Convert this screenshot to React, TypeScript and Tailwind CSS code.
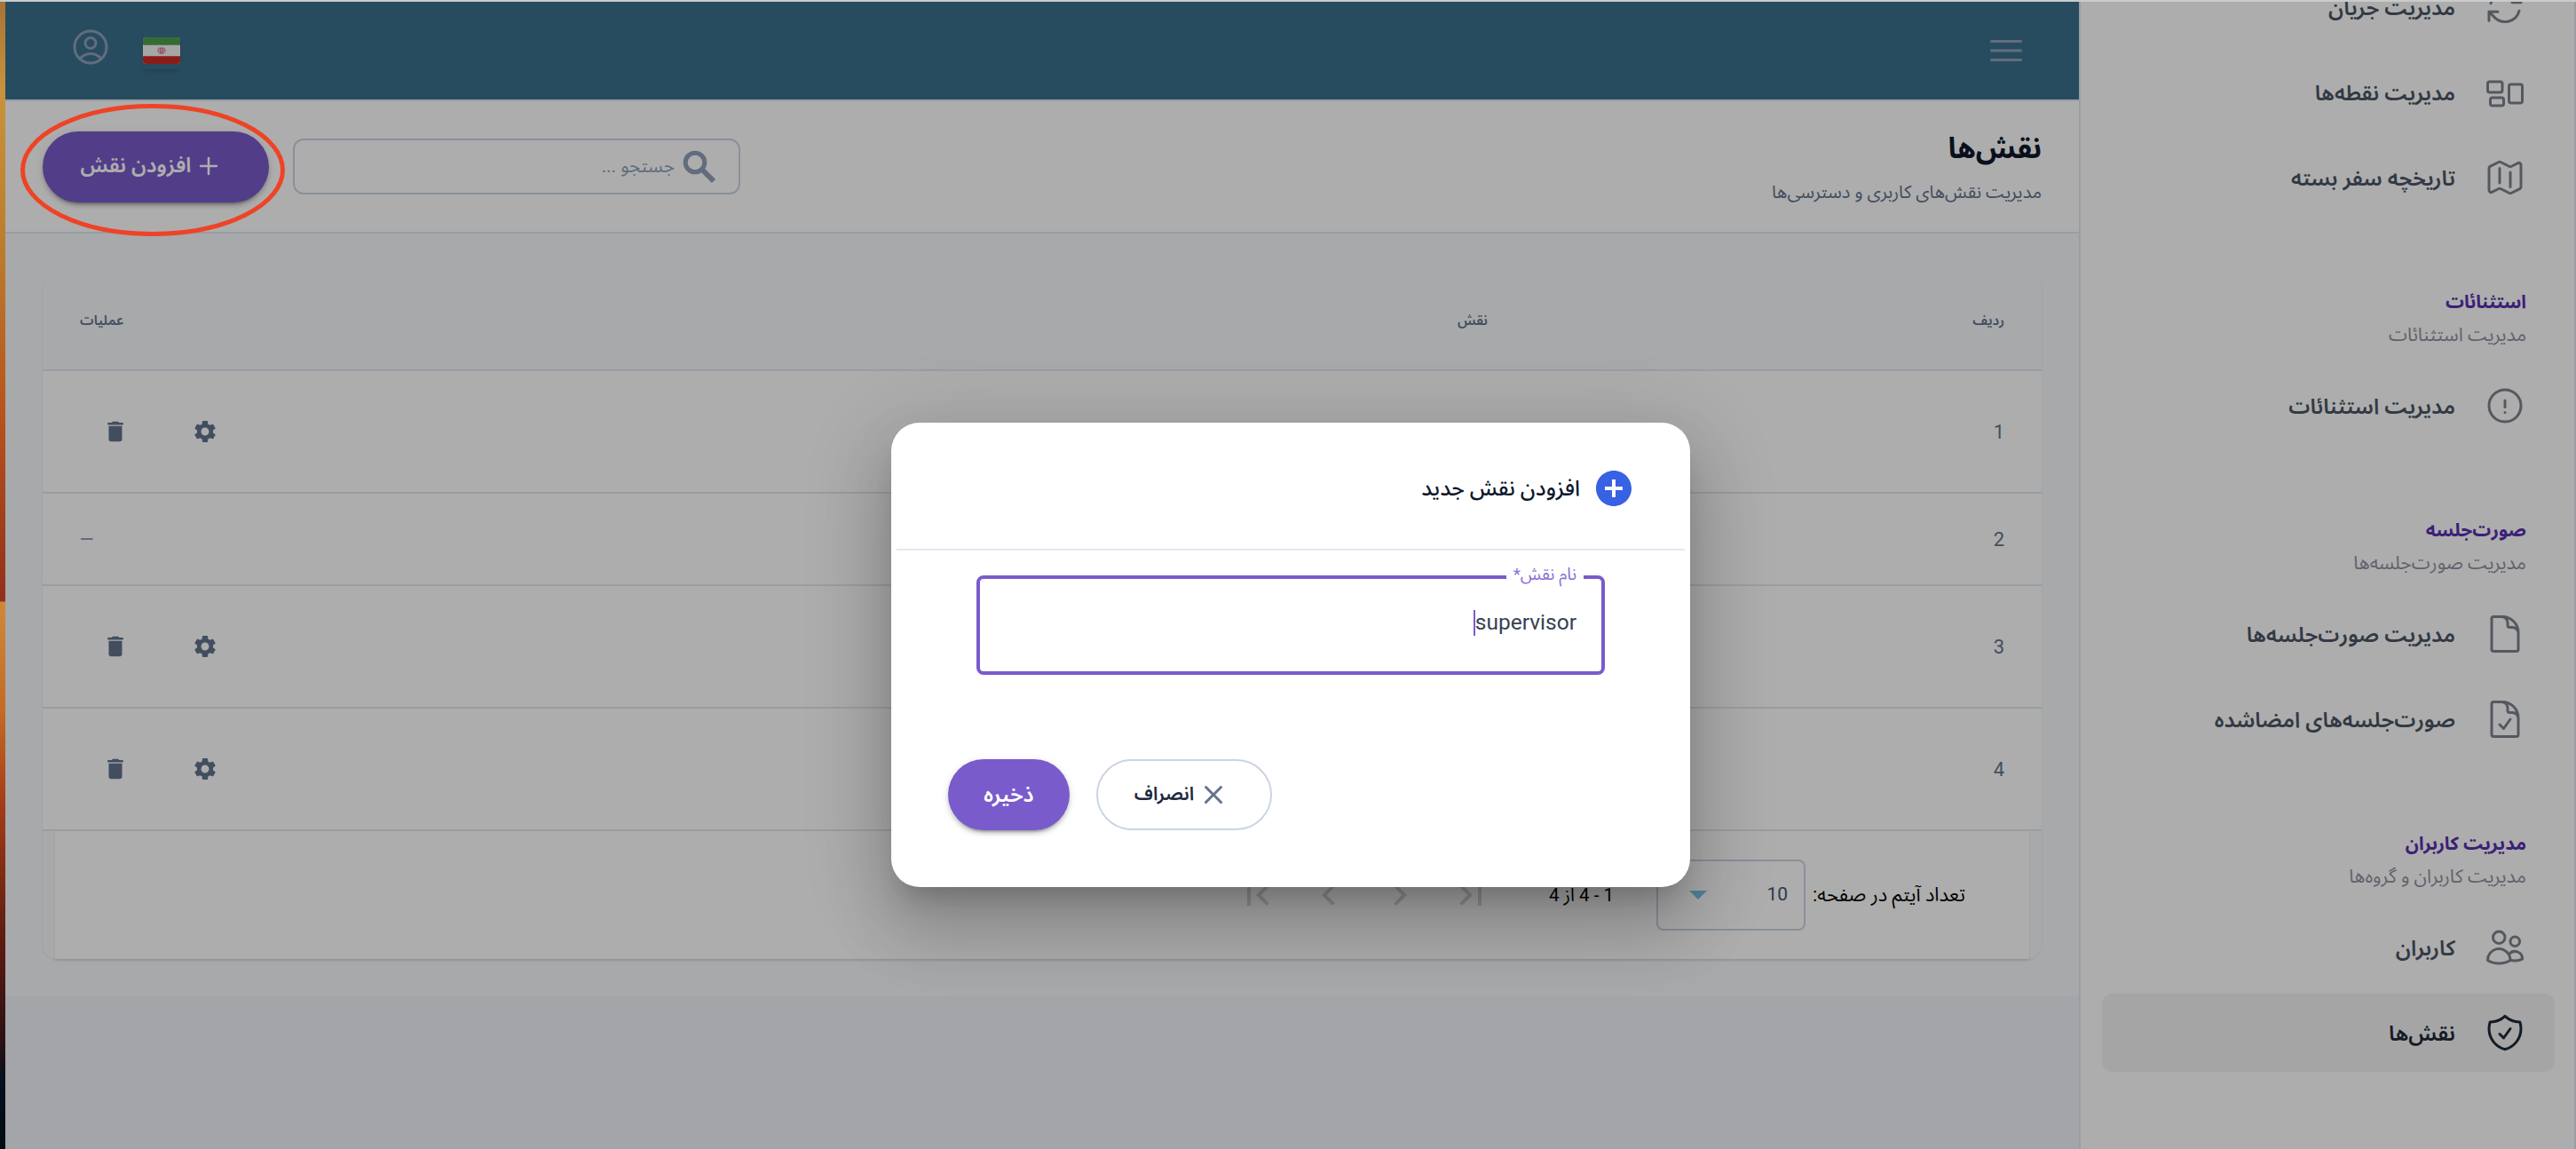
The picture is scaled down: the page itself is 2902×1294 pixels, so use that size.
import React from 'react';
import {
  HiBars3,
  HiMiniPlus,
  HiMiniXMark,
  HiOutlineArrowPath,
  HiOutlineDocument,
  HiOutlineDocumentCheck,
  HiOutlineExclamationCircle,
  HiOutlineMap,
  HiOutlineRectangleGroup,
  HiOutlineShieldCheck,
  HiOutlineUserCircle,
  HiOutlineUsers,
} from 'react-icons/hi2';
import {
  MdAddCircle,
  MdChevronLeft,
  MdChevronRight,
  MdDelete,
  MdFirstPage,
  MdLastPage,
  MdSettings,
} from 'react-icons/md';

type NavItem = { label: string; icon: React.ElementType; active?: boolean };
type NavGroup = { title?: string; subtitle?: string; items: NavItem[] };

const navGroups: NavGroup[] = [
  {
    items: [
      { label: 'مدیریت جریان', icon: HiOutlineArrowPath },
      { label: 'مدیریت نقطه‌ها', icon: HiOutlineRectangleGroup },
      { label: 'تاریخچه سفر بسته', icon: HiOutlineMap },
    ],
  },
  {
    title: 'استثنائات',
    subtitle: 'مدیریت استثنائات',
    items: [{ label: 'مدیریت استثنائات', icon: HiOutlineExclamationCircle }],
  },
  {
    title: 'صورت‌جلسه',
    subtitle: 'مدیریت صورت‌جلسه‌ها',
    items: [
      { label: 'مدیریت صورت‌جلسه‌ها', icon: HiOutlineDocument },
      { label: 'صورت‌جلسه‌های امضاشده', icon: HiOutlineDocumentCheck },
    ],
  },
  {
    title: 'مدیریت کاربران',
    subtitle: 'مدیریت کاربران و گروه‌ها',
    items: [
      { label: 'کاربران', icon: HiOutlineUsers },
      { label: 'نقش‌ها', icon: HiOutlineShieldCheck, active: true },
    ],
  },
  { title: 'تنظیمات', items: [] },
];

const roles = [
  { id: 1, editable: true },
  { id: 2, editable: false },
  { id: 3, editable: true },
  { id: 4, editable: true },
];

function Sidebar() {
  return (
    <aside className="w-[560px] shrink-0 overflow-hidden border-l-2 border-slate-200 bg-white">
      <nav className="-mt-[38px] border-r-2 border-slate-200 pl-6 pr-[22px]">
        {navGroups.map((group, index) => (
          <div key={index}>
            {group.title && (
              <div className="h-[169px] pr-8 pt-[76px]">
                <div className="text-[20.7px] font-bold leading-[41px] text-[#5730b0]">{group.title}</div>
                <div className="text-[21.2px] leading-[32px] text-[#9093a0]">{group.subtitle}</div>
              </div>
            )}
            <div className="flex flex-col gap-2">
              {group.items.map(({ label, icon: Icon, active }) => (
                <div
                  key={label}
                  className={`flex h-[88px] items-center gap-8 rounded-xl pr-8 text-[24.1px] font-semibold ${
                    active ? 'bg-[#f3f3f3] text-gray-800' : 'text-gray-600'
                  }`}
                >
                  <Icon className={`size-12 ${active ? '' : 'text-[#7d848d]'}`} />
                  <span className="pt-0.5">{label}</span>
                </div>
              ))}
            </div>
          </div>
        ))}
      </nav>
    </aside>
  );
}

function IranFlag() {
  return (
    <span className="flex h-[42px] w-[42px] items-center rounded shadow-md">
      <svg viewBox="0 0 42 30" className="h-[30px] w-[42px]">
        <clipPath id="flag">
          <rect width="42" height="30" rx="4" />
        </clipPath>
        <g clipPath="url(#flag)">
          <rect width="42" height="30" fill="#f5f5f5" />
          <rect width="42" height="9" fill="#4f9f4c" />
          <rect width="42" height="9" y="21" fill="#cc2a22" />
          <path d="M0 9h42M0 21h42" stroke="#f5f5f5" strokeWidth="1" strokeDasharray="1 1" />
          <path
            d="M21 11v8M18.8 11.5c-2.6 2.2-2.4 5.6.8 7M23.2 11.5c2.6 2.2 2.4 5.6-.8 7M19.6 12c-.9 2.4-.6 4.6.8 6M22.4 12c.9 2.4.6 4.6-.8 6"
            fill="none"
            stroke="#c8455c"
            strokeWidth="0.9"
          />
        </g>
      </svg>
    </span>
  );
}

function SearchIcon() {
  return (
    <svg viewBox="0 0 48 48" className="size-12" fill="none" stroke="currentColor">
      <circle cx="19" cy="19" r="10.8" strokeWidth="5" />
      <path d="M27 27l13 13" strokeWidth="6" />
    </svg>
  );
}

function TopBar() {
  return (
    <header className="flex h-[110px] shrink-0 items-center justify-between bg-[#3c708d] pl-[72px] pr-[58px] text-slate-400">
      <HiBars3 className="size-12" />
      <div className="flex items-center gap-[35px]">
        <IranFlag />
        <HiOutlineUserCircle className="-mt-2 size-12" />
      </div>
    </header>
  );
}

function PageHeader() {
  return (
    <div className="flex h-[151px] shrink-0 items-center justify-between border-y-2 border-slate-200 bg-white pl-[42px] pr-[42px]">
      <div className="pt-0.5">
        <h1 className="text-[32.5px] font-bold leading-[52px] text-slate-900">نقش‌ها</h1>
        <p className="mt-[3px] text-[20.2px] leading-[40px] text-slate-500">مدیریت نقش‌های کاربری و دسترسی‌ها</p>
      </div>
      <div className="flex items-center gap-[27px]">
        <div className="flex h-[63px] w-[504px] items-center gap-1 rounded-xl border-2 border-slate-300 pr-5 text-slate-400">
          <SearchIcon />
          <span className="text-[20.8px]">جستجو ...</span>
        </div>
        <button className="flex h-20 w-[255px] items-center justify-center gap-[3px] rounded-full bg-[#7a5bcb] pb-0.5 pr-2 text-[23.5px] font-semibold text-white shadow-[0_6px_2px_-4px_rgba(0,0,0,0.2),0_4px_4px_rgba(0,0,0,0.14),0_2px_10px_rgba(0,0,0,0.12)]">
          <HiMiniPlus className="size-[34px]" />
          افزودن نقش
        </button>
      </div>
    </div>
  );
}

function RolesTable() {
  return (
    <div className="rounded-2xl bg-slate-50 shadow-[0_1px_3px_rgba(0,0,0,0.08)]">
      <div className="flex h-[108px] items-center border-b-2 border-slate-200 px-[42px] pb-0.5 text-[15.5px] font-semibold text-slate-500">
        <div className="w-[582px]">ردیف</div>
        <div className="flex-1">نقش</div>
        <div>عملیات</div>
      </div>
      {roles.map((role) => (
        <div
          key={role.id}
          className={`flex items-center justify-between border-b-2 border-slate-200 bg-white px-[42px] text-[22px] text-slate-500 ${
            role.editable ? 'h-[138px]' : 'h-[104px]'
          }`}
        >
          <span>{role.id}</span>
          {role.editable ? (
            <div className="flex gap-[21px]">
              <span className="flex size-20 items-center justify-center">
                <MdSettings className="size-[30px]" />
              </span>
              <span className="flex size-20 items-center justify-center">
                <MdDelete className="size-[30px]" />
              </span>
            </div>
          ) : (
            <span className="text-[20px] font-medium text-slate-400">—</span>
          )}
        </div>
      ))}
      <div className="mx-[14px] flex h-36 items-center bg-white pr-[72px] text-black shadow-[0_2px_3px_rgba(0,0,0,0.1)]">
        <span className="w-[180px] whitespace-nowrap text-[21.8px]">تعداد آیتم در صفحه:</span>
        <div className="flex h-20 w-[168px] items-center justify-between rounded-lg border-2 border-slate-300 pl-[35px] pr-[18px] text-[21px] text-slate-600">
          10
          <span className="h-0 w-0 border-x-[10px] border-t-[10px] border-x-transparent border-t-[#7cc2e6]" />
        </div>
        <span className="mr-[48px] w-[72px] whitespace-nowrap text-[20.5px]">1 - 4 از 4</span>
        <div className="mr-[49px] flex text-[#d6d6d6]">
          <span className="flex w-20 justify-center"><MdLastPage className="size-12" /></span>
          <span className="flex w-20 justify-center"><MdChevronRight className="size-12" /></span>
          <span className="flex w-20 justify-center"><MdChevronLeft className="size-12" /></span>
          <span className="flex w-20 justify-center"><MdFirstPage className="size-12" /></span>
        </div>
      </div>
    </div>
  );
}

function AddRoleDialog() {
  return (
    <div className="h-[523px] w-[900px] rounded-[32px] bg-white shadow-[0_22px_30px_-14px_rgba(0,0,0,0.2),0_48px_76px_6px_rgba(0,0,0,0.14),0_18px_92px_16px_rgba(0,0,0,0.12)]">
      <div className="mx-[6px] flex h-36 items-center gap-[14px] border-b-2 border-slate-200 pb-0.5 pr-14 pt-2">
        <MdAddCircle className="size-12 text-[#3662e3]" />
        <h2 className="text-[24.2px] font-medium text-slate-900">افزودن نقش جدید</h2>
      </div>
      <div className="relative mx-24 mt-7 flex h-28 items-center rounded-lg border-4 border-[#7a5bcb] pr-7">
        <span className="absolute -top-[21px] right-5 bg-white px-2 text-[19px] leading-[32px] text-[#8d6fd2]">
          نام نقش*
        </span>
        <span className="-mt-1.5 flex items-center text-[24.5px] text-gray-700">
          supervisor
          <span className="h-[29px] w-[2px] bg-[#7a5bcb]" />
        </span>
      </div>
      <div className="mt-[95px] flex justify-end gap-[30px] pl-16">
        <button className="flex h-20 w-[198px] items-center justify-center gap-0.5 rounded-full border-2 border-slate-300 pr-[3px] text-[21px] font-semibold text-slate-800">
          <HiMiniXMark className="size-10 text-slate-500" />
          انصراف
        </button>
        <button className="flex h-20 w-[137px] items-center justify-center rounded-full bg-[#7a5bcb] text-[24px] font-semibold text-white shadow-[0_6px_2px_-4px_rgba(0,0,0,0.2),0_4px_4px_rgba(0,0,0,0.14),0_2px_10px_rgba(0,0,0,0.12)]">
          ذخیره
        </button>
      </div>
    </div>
  );
}

export default function App() {
  return (
    <div
      dir="rtl"
      className="relative flex h-[1294px] w-[2902px] overflow-hidden border-t-2 border-[#c9cbcb] bg-[#f2f3f8] font-[Roboto,'Noto_Sans_Arabic','DejaVu_Sans',sans-serif]"
    >
      <Sidebar />
      <main className="flex flex-1 flex-col">
        <TopBar />
        <PageHeader />
        <div className="h-[859px] bg-slate-50 px-[42px] pt-[47px]">
          <RolesTable />
        </div>
      </main>
      {/* desktop wallpaper showing beside the window */}
      <div className="w-[6px] shrink-0 bg-[linear-gradient(to_bottom,#a87334_0,#c8933b_100px,#bb7a2b_290px,#b8561d_450px,#93301a_675px,#cf8838_676px,#c46a24_800px,#a33c16_905px,#5a1c10_1060px,#2c1214_1170px,#03111c_1215px,#020b12_1292px)]" />

      <div className="absolute inset-y-0 left-[6px] right-0 flex justify-center bg-black/32 pt-[474px]">
        <AddRoleDialog />
      </div>

      {/* highlight around the add button */}
      <svg className="absolute left-[20px] top-[112px] h-[156px] w-[304px]" viewBox="0 0 304 156">
        <ellipse cx="152" cy="77.5" rx="146.5" ry="72" fill="none" stroke="#ee4326" strokeWidth="5" />
      </svg>
    </div>
  );
}
